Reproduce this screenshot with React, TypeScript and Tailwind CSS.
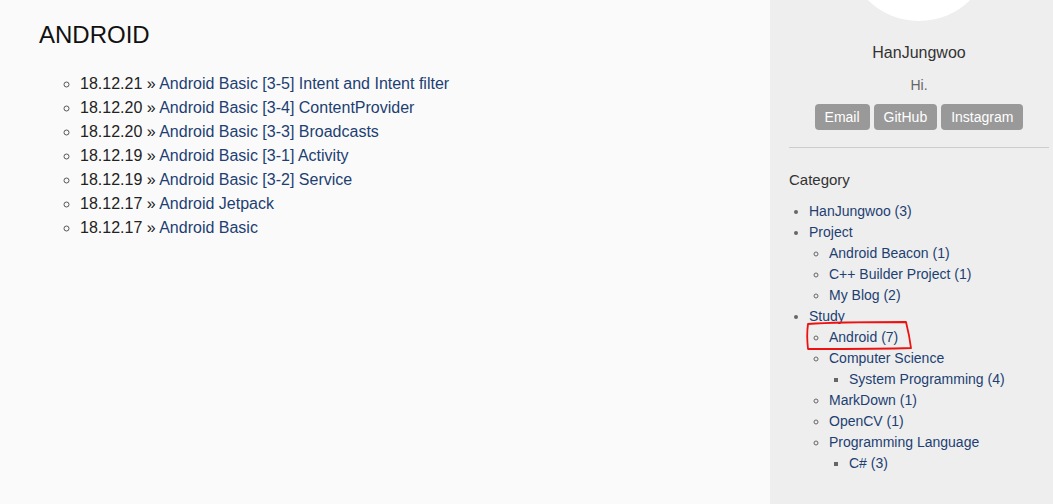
const posts = [
  { date: "18.12.21", title: "Android Basic [3-5] Intent and Intent filter" },
  { date: "18.12.20", title: "Android Basic [3-4] ContentProvider" },
  { date: "18.12.20", title: "Android Basic [3-3] Broadcasts" },
  { date: "18.12.19", title: "Android Basic [3-1] Activity" },
  { date: "18.12.19", title: "Android Basic [3-2] Service" },
  { date: "18.12.17", title: "Android Jetpack" },
  { date: "18.12.17", title: "Android Basic" },
];

const link = "text-[#1d3f72]";

function Sidebar() {
  return (
    <aside className="relative w-[283px] shrink-0 bg-[#eeeeee] pl-[19px] pr-[4px] overflow-hidden">
      <div className="flex flex-col items-center">
        <div className="mt-[-125px] h-[146px] w-[146px] rounded-full bg-white" />
        <p className="mt-[22px] text-[16px] leading-[20px] text-[#333]">HanJungwoo</p>
        <p className="mt-[13px] text-[14px] leading-[18px] text-[#666]">Hi.</p>
        <div className="mt-[10px] flex gap-[4px]">
          {["Email", "GitHub", "Instagram"].map((b) => (
            <span
              key={b}
              className="rounded-[4px] bg-[#999999] px-[10px] h-[26px] flex items-center text-[14px] text-white"
            >
              {b}
            </span>
          ))}
        </div>
      </div>
      <hr className="mt-[17px] border-0 border-t border-[#cccccc]" />
      <p className="mt-[23px] text-[15px] leading-[18px] text-[#333]">Category</p>
      <ul className="mt-[12px] pl-[20px] list-disc text-[14px] leading-[21px] text-[#333] marker:text-[#666]">
        <li>
          <span className={link}>HanJungwoo (3)</span>
        </li>
        <li>
          <span className={link}>Project</span>
          <ul className="pl-[20px] list-[circle]">
            <li className={link}>Android Beacon (1)</li>
            <li className={link}>C++ Builder Project (1)</li>
            <li className={link}>My Blog (2)</li>
          </ul>
        </li>
        <li>
          <span className={link}>Study</span>
          <ul className="pl-[20px] list-[circle]">
            <li className={link}>Android (7)</li>
            <li>
              <span className={link}>Computer Science</span>
              <ul className="pl-[20px] list-[square]">
                <li className={link}>System Programming (4)</li>
              </ul>
            </li>
            <li className={link}>MarkDown (1)</li>
            <li className={link}>OpenCV (1)</li>
            <li>
              <span className={link}>Programming Language</span>
              <ul className="pl-[20px] list-[square]">
                <li className={link}>C# (3)</li>
              </ul>
            </li>
          </ul>
        </li>
      </ul>
      {/* hand-drawn highlight */}
      <svg className="absolute left-[35px] top-[319px]" width="110" height="34" viewBox="0 0 110 34" fill="none">
        <path
          d="M3 5 C30 3 70 3 101 3 C103 11 105 21 106 29 C80 30 40 30 3 30 C2 21 2 12 3 5 Z"
          stroke="#ee1111"
          strokeWidth="1.8"
          strokeLinejoin="round"
        />
      </svg>
    </aside>
  );
}

export default function App() {
  return (
    <div className="flex h-[504px] w-[1053px] overflow-hidden font-['Liberation_Sans',Arial,sans-serif]">
      <main className="flex-1 bg-[#fafafa] pl-[39px] pt-[21px]">
        <h1 className="text-[24px] leading-[28px] text-[#111]">ANDROID</h1>
        <ul className="mt-[23px] pl-[41px] list-[circle] text-[16px] leading-[24px] text-[#222] marker:text-[#555]">
          {posts.map((p, i) => (
            <li key={i}>
              {p.date} » <span className={link}>{p.title}</span>
            </li>
          ))}
        </ul>
      </main>
      <Sidebar />
    </div>
  );
}
